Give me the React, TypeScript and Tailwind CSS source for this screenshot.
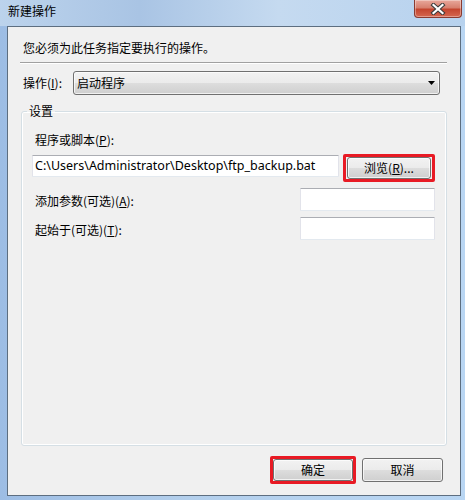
import type { ReactNode } from "react";

function Win7Button({ children, className }: { children: ReactNode; className: string }) {
  return (
    <div
      className={
        "flex items-center justify-center rounded-[3px] border border-[#707070] bg-[linear-gradient(to_bottom,#f2f2f2_0%,#ebebeb_50%,#dddddd_51%,#cfcfcf_100%)] shadow-[inset_0_0_0_1px_rgba(255,255,255,0.7)] text-[12px] leading-[16px] " +
        className
      }
    >
      {children}
    </div>
  );
}

function TextBox({ className, children }: { className: string; children?: ReactNode }) {
  return (
    <div
      className={
        "flex items-center bg-white border border-[#e2e3ea] border-t-[#abadb3] border-b-[#e3e9ef] rounded-[1px] " +
        className
      }
    >
      {children}
    </div>
  );
}

export default function App() {
  return (
    <div className="w-[465px] h-[500px] flex flex-col overflow-hidden bg-[linear-gradient(to_right,#9dbde4_0%,#b3cfec_40%,#b9d6f3_100%)] font-['Noto_Sans_CJK_SC',sans-serif] text-[12px] text-black">
      {/* title bar */}
      <div className="h-[26px] shrink-0 flex items-start justify-between pl-[8px] pr-[3px] bg-[linear-gradient(to_right,#bcd3ec_0%,#a9c4e4_30%,#c5daf0_60%,#b7d2ee_100%)]">
        <div className="pt-[3px] leading-[16px] text-[12px] text-black">新建操作</div>
        <div className="w-[48px] h-[18px] rounded-b-[4px] border border-t-0 border-[#8a3a30] bg-[linear-gradient(to_bottom,#e8a89c_0%,#d7806f_45%,#c4452f_55%,#d5674f_100%)] shadow-[inset_0_0_0_1px_rgba(255,255,255,0.35)] flex items-center justify-center">
          <svg width="16" height="12" viewBox="0 0 16 12">
            <path d="M3.5 2 L12.5 10 M12.5 2 L3.5 10" stroke="#3b3b3b" strokeWidth="4.2" strokeLinecap="square" />
            <path d="M3.5 2 L12.5 10 M12.5 2 L3.5 10" stroke="#ffffff" strokeWidth="2.2" strokeLinecap="square" />
          </svg>
        </div>
      </div>

      {/* client area */}
      <div className="flex-1 pl-[7px] pr-[4px] pb-[4px] flex">
        <div className="flex-1 border border-[#5d6e80] bg-[#f0f0f0] flex flex-col">
          <div className="pt-[13px] pl-[15px] leading-[16px]">您必须为此任务指定要执行的操作。</div>

          <div className="mt-[6px] ml-[12px] mr-[13px] h-[2px] border-t border-[#a0a0a0] border-b border-b-white" />

          <div className="mt-[7px] flex items-center h-[24px] pl-[15px] pr-[20px]">
            <div className="w-[50px] leading-[16px]">
              操作(<u>I</u>):
            </div>
            <div className="flex-1 h-[24px] rounded-[3px] border border-[#707070] bg-[linear-gradient(to_bottom,#f2f2f2_0%,#ebebeb_50%,#dddddd_51%,#cfcfcf_100%)] shadow-[inset_0_0_0_1px_rgba(255,255,255,0.7)] flex items-center justify-between pl-[3px] pr-[4px]">
              <span className="leading-[16px]">启动程序</span>
              <svg width="7" height="4" viewBox="0 0 7 4">
                <path d="M0 0 H7 L3.5 4 Z" fill="#000" />
              </svg>
            </div>
          </div>

          <fieldset className="mt-[8px] mx-[13px] h-[343px] border border-[#d5dfe5] rounded-[3px] shadow-[inset_0_0_0_1px_#ffffff] flex flex-col">
            <legend className="ml-[5px] px-[2px] leading-[16px]">设置</legend>

            <div className="mt-[13px] pl-[13px] leading-[16px]">
              程序或脚本(<u>P</u>):
            </div>

            <div className="mt-[6px] ml-[10px] mr-[11px] flex items-start justify-between">
              <TextBox className="mt-[1px] w-[307px] h-[22px] pl-[2px]">
                <span className="font-['Noto_Sans',sans-serif] text-[12.5px] leading-[16px] whitespace-nowrap">
                  C:\Users\Administrator\Desktop\ftp_backup.bat
                </span>
              </TextBox>
              <div className="w-[92px] h-[28px] border-[3px] border-[#e81a24] rounded-[2px] flex items-center justify-center">
                <Win7Button className="w-[84px] h-[22px]">
                  浏览(<u>R</u>)...
                </Win7Button>
              </div>
            </div>

            <div className="mt-[6px] pl-[13px] pr-[11px] flex items-center justify-between">
              <div className="leading-[16px] pt-[3px]">
                添加参数(可选)(<u>A</u>):
              </div>
              <TextBox className="w-[135px] h-[23px]" />
            </div>

            <div className="mt-[6px] pl-[13px] pr-[11px] flex items-center justify-between">
              <div className="leading-[16px] pt-[3px]">
                起始于(可选)(<u>T</u>):
              </div>
              <TextBox className="w-[135px] h-[23px]" />
            </div>
          </fieldset>

          <div className="mt-[10px] pr-[17px] flex items-center justify-end gap-[6px]">
            <div className="w-[86px] h-[28px] border-[3px] border-[#e81a24] rounded-[2px] flex items-center justify-center">
              <Win7Button className="w-[80px] h-[22px]">确定</Win7Button>
            </div>
            <Win7Button className="w-[81px] h-[24px]">取消</Win7Button>
          </div>
        </div>
      </div>
    </div>
  );
}
